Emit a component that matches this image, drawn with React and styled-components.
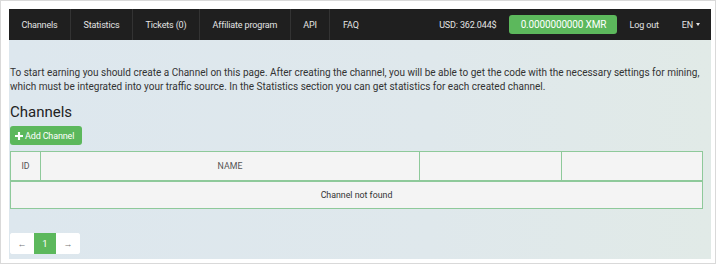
import React from 'react';
import styled, { createGlobalStyle } from 'styled-components';

const GlobalStyle = createGlobalStyle`
  html, body {
    margin: 0;
    padding: 0;
    background: #fff;
  }
  body {
    font-family: Roboto, "Liberation Sans", sans-serif;
  }
`;

const Frame = styled.div`
  width: 716px;
  height: 264px;
  box-sizing: border-box;
  border: 1px solid #d9d9d9;
  padding: 8px 4px 4px 8px;
  overflow: hidden;
`;

const Page = styled.div`
  height: 100%;
  background: linear-gradient(90deg, #dde7ee 0%, #dfe8ec 60%, #e1eae7 100%);
  display: flex;
  flex-direction: column;
`;

const NavBar = styled.nav`
  height: 31px;
  background: #1f1f1f;
  display: flex;
  align-items: stretch;
  font-size: 9px;
  letter-spacing: -0.15px;
  color: #e4e4e4;
  white-space: nowrap;
`;

const NavLeft = styled.ul`
  list-style: none;
  margin: 0;
  padding: 0;
  display: flex;
  flex: 1;

  li {
    display: flex;
    align-items: center;
    padding: 0 12.5px;
    border-right: 1px solid #333;
  }
  li:last-child {
    border-right: none;
  }
`;

const NavRight = styled.div`
  display: flex;
  align-items: center;
  padding-right: 11px;
`;

const Balance = styled.span`
  margin-right: 13px;
`;

const XmrButton = styled.span`
  background: #5cb85c;
  color: #fff;
  border-radius: 3px;
  width: 108px;
  height: 19px;
  display: flex;
  align-items: center;
  justify-content: center;
  font-size: 10px;
  margin-right: 12px;
`;

const Lang = styled.span`
  margin-left: 23px;
  display: flex;
  align-items: center;
  gap: 3px;
`;

const Caret = styled.span`
  width: 0;
  height: 0;
  border-left: 2.5px solid transparent;
  border-right: 2.5px solid transparent;
  border-top: 3px solid #e4e4e4;
`;

const Content = styled.div`
  padding: 26px 8px 0 1px;
  color: #333;
`;

const Intro = styled.p`
  margin: 0;
  font-size: 10px;
  line-height: 13.5px;
`;

const Title = styled.h2`
  margin: 10px 0 5px;
  font-size: 15px;
  font-weight: 400;
  line-height: 18px;
  color: #222;
`;

const GreenButton = styled.button`
  background: #5cb85c;
  color: #fff;
  border: none;
  border-radius: 3px;
  height: 19px;
  width: 72px;
  padding: 0 0 0 5px;
  font-family: inherit;
  font-size: 9px;
  letter-spacing: -0.15px;
  display: flex;
  align-items: center;
  gap: 2px;
`;

const Table = styled.table`
  margin-top: 6px;
  width: 693px;
  border-collapse: collapse;
  background: #f4f4f4;
  font-size: 8.8px;
  color: #555;

  th, td {
    border: 1px solid #8ec99a;
    text-align: center;
    font-weight: 400;
    padding: 0;
  }
  th {
    height: 28px;
    border-bottom-width: 2px;
    border-left-color: #bdbdbd;
  }
  th:first-child {
    border-left-color: #8ec99a;
  }
  td {
    height: 26px;
    color: #333;
  }
`;

const Pager = styled.div`
  margin-top: 24px;
  display: flex;
  width: 70px;
  height: 21px;
  background: #fff;
  border-radius: 3px;
  overflow: hidden;
`;

const PageCell = styled.span`
  flex: ${p => (p.$active ? '0 0 22px' : '1')};
  display: flex;
  align-items: center;
  justify-content: center;
  font-size: ${p => (p.$active ? 9.5 : 9)}px;
  background: ${p => (p.$active ? '#5cb85c' : '#fff')};
  color: ${p => (p.$active ? '#fff' : '#777')};
`;

function Plus() {
  return (
    <svg width="8" height="8" viewBox="0 0 9 9">
      <path d="M3.3 0h2.4v3.3H9v2.4H5.7V9H3.3V5.7H0V3.3h3.3z" fill="#fff" />
    </svg>
  );
}

export default function App() {
  return (
    <>
      <GlobalStyle />
      <Frame>
        <Page>
          <NavBar>
            <NavLeft>
              <li>Channels</li>
              <li>Statistics</li>
              <li>Tickets (0)</li>
              <li>Affiliate program</li>
              <li>API</li>
              <li>FAQ</li>
            </NavLeft>
            <NavRight>
              <Balance>USD: 362.044$</Balance>
              <XmrButton>0.0000000000 XMR</XmrButton>
              <span>Log out</span>
              <Lang>EN <Caret /></Lang>
            </NavRight>
          </NavBar>
          <Content>
            <Intro>
              To start earning you should create a Channel on this page. After creating the channel, you will be able to get the code with the necessary settings for mining,
              which must be integrated into your traffic source. In the Statistics section you can get statistics for each created channel.
            </Intro>
            <Title>Channels</Title>
            <GreenButton><Plus /> Add Channel</GreenButton>
            <Table>
              <thead>
                <tr>
                  <th style={{ width: 29 }}>ID</th>
                  <th style={{ width: 378 }}>NAME</th>
                  <th style={{ width: 141 }}></th>
                  <th></th>
                </tr>
              </thead>
              <tbody>
                <tr>
                  <td colSpan={4}>Channel not found</td>
                </tr>
              </tbody>
            </Table>
            <Pager>
              <PageCell>←</PageCell>
              <PageCell $active>1</PageCell>
              <PageCell>→</PageCell>
            </Pager>
          </Content>
        </Page>
      </Frame>
    </>
  );
}
